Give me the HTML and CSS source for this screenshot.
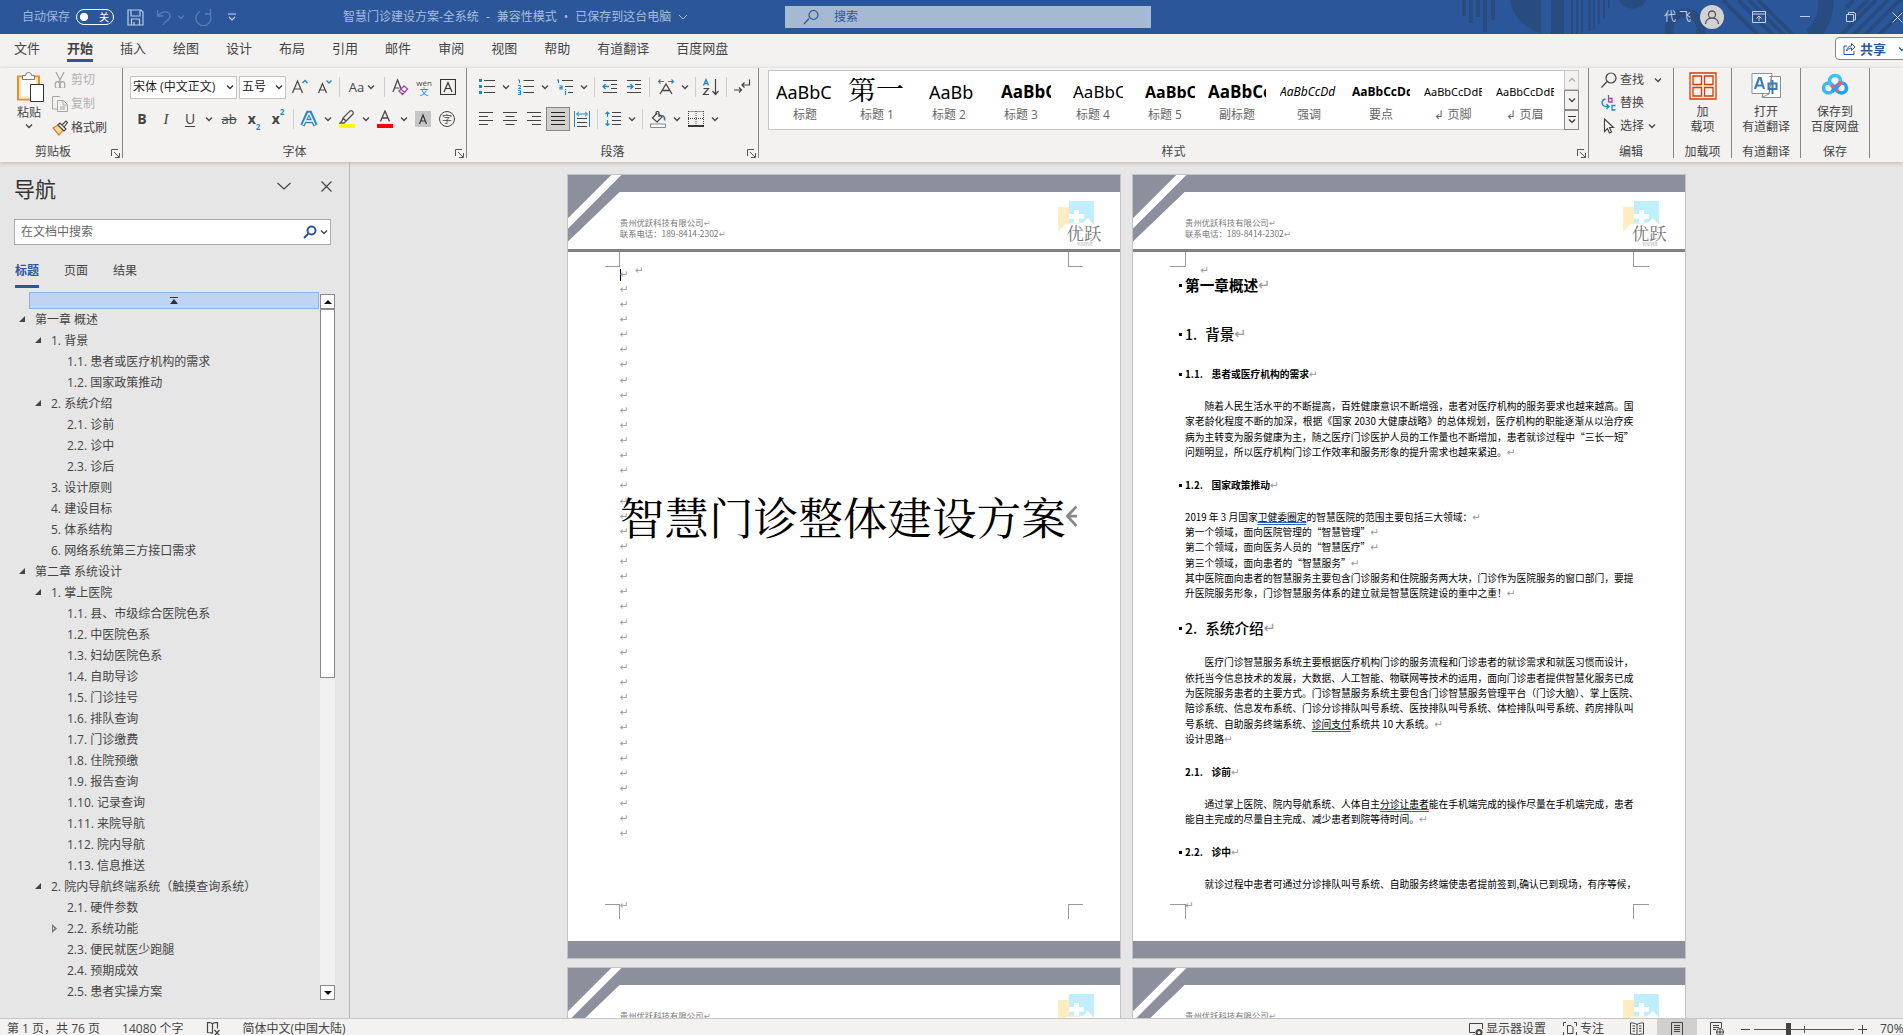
FILE: index.html
```html
<!DOCTYPE html>
<html lang="zh-CN">
<head>
<meta charset="utf-8">
<title>智慧门诊建设方案-全系统</title>
<link rel="stylesheet" href="styles.css">
</head>
<body>
<svg class="defs" aria-hidden="true">
  <symbol id="chev" viewBox="0 0 8 8"><path d="M1 2.5l3 3 3-3" fill="none" stroke="currentColor" stroke-width="1.3"/></symbol>
  <symbol id="launch" viewBox="0 0 9 9"><path d="M.5 7V.5H7M3 3l5 5M8.500 4v4.500H4" fill="none" stroke="#555"/></symbol>
  <symbol id="corner" viewBox="0 0 54 67"><path d="M51 17L0 66V0H51Z" fill="#8b909c"/><path d="M43 0H53L0 53V43Z" fill="#fff"/></symbol>
  <symbol id="logo" viewBox="0 0 44 47">
    <path d="M0 7h12v16h12v-1L22 24H8L0 32Z" fill="#ffecc0"/>
    <path d="M11 1h25v24l-6-7-5 5H11Z" fill="#bfeeff"/>
    <path d="M16 10h5v4h5v5h-5v4h-5v-4h-5v-5h5Z" fill="#fff"/>
  </symbol>
</svg>

<header class="titlebar">
  <svg class="deco" width="463" height="34" viewBox="0 0 463 34" aria-hidden="true">
    <g fill="#284c80">
      <path d="M22 0h4v16h-4zM29 0h4v23h-4zM36 0h4v17h-4zM43 0h4v32h-4zM51 0h4v20h-4z"/>
      <path d="M70 0h31v33C85 29 73 17 70 0ZM111 0h13v34h-13zM131 0h2v34h-2zM136 0h2v34h-2zM141 0h2v33h-2zM148 0h3v31h-3zM153 0h2v29h-2zM158 0h2v24h-2zM163 0h2v18h-2zM168 0h2v8h-2z"/>
      <path d="M179 0h27a14 12 0 0 1-27 0Z"/>
    </g>
    <g fill="none" stroke="#284c80">
      <circle cx="245" cy="29" r="16" stroke-width="9"/>
      <path d="M283 0l40 40M298 0l38 38M309 0l36 36M318 0l34 34" stroke-width="4"/>
      <path d="M386 0q0 25-16 36" stroke-width="15"/>
      <path d="M396 40L436 0M408 40L448 0M420 40L462 -2M434 40L470 4M406 8l8-8M408 20l20-20" stroke-width="4"/>
    </g>
  </svg>
  <div class="quick">
    <span class="autosave">自动保存</span>
    <button class="toggle" aria-label="自动保存 关"><i></i><span>关</span></button>
    <button class="tb save" aria-label="保存"><svg width="17" height="17" viewBox="0 0 17 17"><path d="M1 1h13l2 2v13H1ZM4 1v6h9V1M4.500 16v-6h8v6M7 13v3" fill="none" stroke="#b9cae6" stroke-width="1.200"/></svg></button>
    <button class="tb undo" aria-label="撤消"><svg width="16" height="17" viewBox="0 0 16 17"><path d="M1.500 1v6h6M2 7C5 2 14 1 14 7c0 4-5 5-7 9" fill="none" stroke="#5a7db8" stroke-width="1.300"/></svg></button>
    <button class="tb" aria-label="撤消选项"><svg class="c dim"><use href="#chev"/></svg></button>
    <button class="tb redo" aria-label="重复"><svg width="17" height="17" viewBox="0 0 17 17"><path d="M10 5h5.500V0M15 5.500A7.500 7.500 0 1 1 5 2.500" fill="none" stroke="#5a7db8" stroke-width="1.300"/></svg></button>
    <button class="tb more" aria-label="自定义快速访问工具栏"><svg width="8" height="8" viewBox="0 0 8 8"><path d="M0 1h8M1 4l3 3 3-3" fill="none" stroke="#c6d4ec" stroke-width="1.200"/></svg></button>
  </div>
  <div class="doctitle"><span>智慧门诊建设方案-全系统</span><span>-</span><span>兼容性模式</span><span>•</span><span>已保存到这台电脑</span><svg width="10" height="10" viewBox="0 0 10 10"><path d="M1 3l4 4 4-4" fill="none" stroke="currentColor"/></svg></div>
  <label class="topsearch"><svg width="16" height="16" viewBox="0 0 16 16"><path d="M6 9.500L1 15M6 6a4.500 4.500 0 1 0 9 0a4.500 4.500 0 1 0-9 0" fill="none" stroke="#2b579a" stroke-width="1.200"/></svg><input type="text" placeholder="搜索"></label>
  <div class="account">
    <span>代 飞</span>
    <span class="avatar"><svg width="16" height="16" viewBox="0 0 16 16"><path d="M4.500 5.500a3.500 3.500 0 1 0 7 0a3.500 3.500 0 1 0-7 0M1.500 15c0-4 3-6 6.500-6s6.500 2 6.500 6" fill="none" stroke="#555" stroke-width="1.300"/></svg></span>
  </div>
  <div class="winctl">
    <button aria-label="功能区显示选项"><svg width="14" height="12" viewBox="0 0 14 12"><path d="M.5.5h13v11H.5ZM.5 3h13M7 10V5M4.500 7.500L7 5l2.500 2.500" fill="none" stroke="currentColor"/></svg></button>
    <button aria-label="最小化"><svg width="10" height="10" viewBox="0 0 10 10"><path d="M0 4.500h10" stroke="currentColor"/></svg></button>
    <button aria-label="还原"><svg width="10" height="10" viewBox="0 0 10 10"><path d="M.5 2.500h7v7h-7ZM2.500 2V.5h5.500a1.500 1.500 0 0 1 1.500 1.500V8H8" fill="none" stroke="currentColor"/></svg></button>
    <button aria-label="关闭"><svg width="11" height="11" viewBox="0 0 11 11"><path d="M.5.5l10 10M10.500.5l-10 10" stroke="currentColor"/></svg></button>
  </div>
</header>

<nav class="tabs">
  <a href="#">文件</a><a href="#" class="on">开始</a><a href="#">插入</a><a href="#">绘图</a><a href="#">设计</a><a href="#">布局</a><a href="#">引用</a><a href="#">邮件</a><a href="#">审阅</a><a href="#">视图</a><a href="#">帮助</a><a href="#">有道翻译</a><a href="#">百度网盘</a>
  <button class="share"><svg width="13" height="13" viewBox="0 0 13 13"><path d="M4 4H1v8.500h10V9M3.500 9C4 5.500 6 4 8.500 4V1.500L12 5 8.500 8.500V6C6.500 6 5 7 3.500 9Z" fill="none" stroke="#2b579a"/></svg><b>共享</b><svg class="c"><use href="#chev"/></svg></button>
</nav>

<section class="ribbon">
  <div class="group g-clip">
    <div class="body cliprow">
      <button class="big"><svg width="32" height="31" viewBox="-4 0 32 31"><path d="M1 4.500h21v23H1Z" fill="#fff" stroke="#e6902a" stroke-width="2"/><path d="M3 6.500h17v19H3Z" fill="none" stroke="#fbe3b8" stroke-width="2"/><path d="M5.500 7.500V3.500h3a3 3 0 0 1 6 0h3v4Z" fill="#fff" stroke="#777"/><path d="M13.500 12.500h13v17h-13Z" fill="#fff" stroke="#333"/></svg><span>粘贴</span><svg class="c"><use href="#chev"/></svg></button>
      <div class="stack">
        <button class="off"><svg width="16" height="16" viewBox="0 0 16 16"><path d="M4 0l5.500 11M12 0L6.500 11M3.500 13a2.300 2.300 0 1 0 4 0a2.300 2.300 0 1 0-4 0M8.500 13a2.300 2.300 0 1 0 4 0a2.300 2.300 0 1 0-4 0" fill="none" stroke="#a5a5a5" stroke-width="1.200"/></svg>剪切</button>
        <button class="off"><svg width="16" height="16" viewBox="0 0 16 16"><path d="M5 13H.5V.5h7l1 1M5.500 4.500h6l4 4v7h-10ZM11 5v4h4M8 11h5M8 13h5" fill="none" stroke="#a5a5a5"/></svg>复制</button>
        <button><svg width="16" height="16" viewBox="0 0 16 16"><path d="M1 8l5-3 5 5-4 5Z" fill="#fbd9a5" stroke="#e07a1c" stroke-width="1.200"/><path d="M6 5l2-2 6 6-2 2ZM10 5l4-4 1.500 1.500L12 7" fill="#fff" stroke="#444" stroke-width="1.200"/></svg>格式刷</button>
      </div>
    </div>
    <div class="cap">剪贴板<svg class="launch"><use href="#launch"/></svg></div>
  </div>

  <div class="group g-font">
    <div class="body rows">
      <div class="row">
        <select class="face" aria-label="字体"><option>宋体 (中文正文)</option></select>
        <select class="size" aria-label="字号"><option>五号</option></select>
        <button class="ib" aria-label="增大字号"><svg width="18" height="18" viewBox="0 0 18 18"><path d="M1.500 15L6.500 3l5 12M3.200 11h6.600" fill="none" stroke="#444" stroke-width="1.200"/><path d="M11.500 5L14 2.500 16.500 5" fill="none" stroke="#1f88cc" stroke-width="1.300"/></svg></button>
        <button class="ib" aria-label="减小字号"><svg width="18" height="18" viewBox="0 0 18 18"><path d="M3.500 15L7.500 5.500l4 9.500M4.800 12h5.400" fill="none" stroke="#444" stroke-width="1.200"/><path d="M11.500 2.500L14 5l2.500-2.500" fill="none" stroke="#1f88cc" stroke-width="1.300"/></svg></button>
        <i class="sep"></i>
        <button class="ib w38 aa">Aa<svg class="c"><use href="#chev"/></svg></button>
        <i class="sep"></i>
        <button class="ib" aria-label="清除格式"><svg width="18" height="18" viewBox="0 0 18 18"><path d="M2 14L6.500 2 11 13M3.500 10h5" fill="none" stroke="#444" stroke-width="1.200"/><path d="M8 13l5-5 3.500 3-5 5.500ZM10 11l3.500 3.500" fill="#fff" stroke="#a33fb0" stroke-width="1.400"/></svg></button>
        <button class="ib pinyin" aria-label="拼音指南"><span>wén</span><em>文</em></button>
        <button class="ib" aria-label="字符边框"><svg width="16" height="16" viewBox="0 0 16 16"><path d="M.5.5h15v15H.5ZM4 13L8 3.500 12 13M5.300 9.500h5.400" fill="none" stroke="#333" stroke-width="1.200"/></svg></button>
      </div>
      <div class="row">
        <button class="ib"><b>B</b></button>
        <button class="ib it">I</button>
        <button class="ib un">U</button>
        <button class="dd" aria-label="下划线选项"><svg class="c"><use href="#chev"/></svg></button>
        <button class="ib w26 st"><span>ab</span></button>
        <button class="ib"><b>x</b><sub>2</sub></button>
        <button class="ib"><b>x</b><sup>2</sup></button>
        <i class="sep"></i>
        <button class="ib" aria-label="文本效果"><svg width="18" height="18" viewBox="0 0 18 18"><path d="M2.500 15.500L8 3h2l5.500 12.500M5.500 11h7" fill="none" stroke="#2f86cf" stroke-width="4.500"/><path d="M3 15L8.500 3.500h1L15 15M5.500 11h7" fill="none" stroke="#fff" stroke-width="1.300"/></svg></button>
        <button class="dd" aria-label="文本效果选项"><svg class="c"><use href="#chev"/></svg></button>
        <button class="ib" aria-label="突出显示"><svg width="18" height="18" viewBox="0 0 18 18"><path d="M1 14h16v4H1Z" fill="#ff0"/><path d="M5 8l3 3 7-7c1-2-1-4-3-3ZM5 8l-1 3-2 2h4l2-2" fill="none" stroke="#555" stroke-width="1.300"/></svg></button>
        <button class="dd" aria-label="颜色选项"><svg class="c"><use href="#chev"/></svg></button>
        <button class="ib" aria-label="字体颜色"><svg width="18" height="18" viewBox="0 0 18 18"><path d="M1 14h16v4H1Z" fill="#f00"/><path d="M4.500 11.500L9 1l4.500 10.500M6 8h6" fill="none" stroke="#444" stroke-width="1.300"/></svg></button>
        <button class="dd" aria-label="字体颜色选项"><svg class="c"><use href="#chev"/></svg></button>
        <button class="ib" aria-label="字符底纹"><svg width="16" height="16" viewBox="0 0 16 16"><path d="M0 0h16v16H0Z" fill="#c6c6c6"/><path d="M4.500 13L8 4l3.500 9M5.700 10h4.600" fill="none" stroke="#333" stroke-width="1.200"/></svg></button>
        <button class="ib circ"><span>字</span></button>
      </div>
    </div>
    <div class="cap">字体<svg class="launch"><use href="#launch"/></svg></div>
  </div>

  <div class="group g-para">
    <div class="body rows">
      <div class="row">
        <button class="ib w25" aria-label="项目符号"><svg width="16" height="16" viewBox="0 0 16 16"><path d="M0 0h3v3H0zM0 6h3v3H0zM0 12h3v3H0z" fill="#1f88cc"/><path d="M5 1.500h11M5 7.500h11M5 13.500h11" stroke="#444"/></svg></button>
        <button class="dd" aria-label="项目符号选项"><svg class="c"><use href="#chev"/></svg></button>
        <button class="ib w25" aria-label="编号"><svg width="16" height="16" viewBox="0 0 16 16"><path d="M0 1h1.500v3M0 6.500h2.500V8L.5 9.500h2.500M0 11.500h2.500v4H0M.5 13.500h2" fill="none" stroke="#1f88cc"/><path d="M5.500 1.500H16M5.500 7.500H16M5.500 13.500H16" stroke="#444"/></svg></button>
        <button class="dd" aria-label="编号选项"><svg class="c"><use href="#chev"/></svg></button>
        <button class="ib w25" aria-label="多级列表"><svg width="16" height="16" viewBox="0 0 16 16"><path d="M0 1h1.500v3M2.500 7h2.500v3H3V8.500h2M8.500 10v1M8.500 12v4" fill="none" stroke="#1f88cc" stroke-width="1.200"/><path d="M5 1.500h11M8 7.500h8M11 13.500h5" stroke="#444"/></svg></button>
        <button class="dd" aria-label="多级列表选项"><svg class="c"><use href="#chev"/></svg></button>
        <i class="sep"></i>
        <button class="ib" aria-label="减少缩进量"><svg width="16" height="16" viewBox="0 0 16 16"><path d="M1 1.500h14M9 5.500h6M9 9.500h6M1 13.500h14" stroke="#444"/><path d="M7 7.500H1M3.500 5L1 7.500 3.500 10" fill="none" stroke="#1f88cc" stroke-width="1.300"/></svg></button>
        <button class="ib" aria-label="增加缩进量"><svg width="16" height="16" viewBox="0 0 16 16"><path d="M1 1.500h14M9 5.500h6M9 9.500h6M1 13.500h14" stroke="#444"/><path d="M1 7.500h6M4.500 5L7 7.500 4.500 10" fill="none" stroke="#1f88cc" stroke-width="1.300"/></svg></button>
        <i class="sep"></i>
        <button class="ib w25" aria-label="中文版式"><svg width="18" height="18" viewBox="0 0 18 18"><path d="M3 16L9 6l6 10M5 12.500h8" fill="none" stroke="#444" stroke-width="1.300"/><path d="M7 3.500H1.500M3.500 1.500l-2 2 2 2M11 3.500h5.500M14.500 1.500l2 2-2 2" fill="none" stroke="#1f88cc" stroke-width="1.200"/></svg></button>
        <button class="dd" aria-label="中文版式选项"><svg class="c"><use href="#chev"/></svg></button>
        <i class="sep"></i>
        <button class="ib" aria-label="排序"><svg width="18" height="18" viewBox="0 0 18 18"><path d="M1.500 7.500L4 1.500l2.500 6M2.500 5.500h3" fill="none" stroke="#1f88cc" stroke-width="1.300"/><path d="M1.500 10.500h5l-5 6h5.500M13.500 1v15M10.500 13l3 3.500 3-3.500" fill="none" stroke="#444" stroke-width="1.200"/></svg></button>
        <i class="sep"></i>
        <button class="ib" aria-label="显示编辑标记"><svg width="18" height="18" viewBox="0 0 18 18"><path d="M16.500 1.500v5.500H9M11.500 4.500L9 7l2.500 2.500M1 12h7.500M6 9.500L8.500 12 6 14.500" fill="none" stroke="#444" stroke-width="1.200"/></svg></button>
      </div>
      <div class="row">
        <button class="ib" aria-label="左对齐"><svg width="14" height="14" viewBox="0 0 14 14"><path d="M0 .5h14M0 4.500h9M0 8.500h14M0 12.500h9" stroke="#444"/></svg></button>
        <button class="ib" aria-label="居中"><svg width="14" height="14" viewBox="0 0 14 14"><path d="M0 .5h14M2.500 4.500h9M0 8.500h14M2.500 12.500h9" stroke="#444"/></svg></button>
        <button class="ib" aria-label="右对齐"><svg width="14" height="14" viewBox="0 0 14 14"><path d="M0 .5h14M5 4.500h9M0 8.500h14M5 12.500h9" stroke="#444"/></svg></button>
        <button class="ib sel" aria-label="两端对齐"><svg width="14" height="14" viewBox="0 0 14 14"><path d="M0 .5h14M0 4.500h14M0 8.500h14M0 12.500h14" stroke="#222"/></svg></button>
        <button class="ib" aria-label="分散对齐"><svg width="16" height="16" viewBox="0 0 16 16"><path d="M.5 0v16M15.500 0v16M2.500 3h11M5 .8L2.500 3 5 5.200M11 .8L13.500 3 11 5.200" fill="none" stroke="#1f88cc"/><path d="M3 7.500h10M3 11.500h10M3 15.500h10" stroke="#444"/></svg></button>
        <i class="sep"></i>
        <button class="ib" aria-label="行距"><svg width="16" height="16" viewBox="0 0 16 16"><path d="M2.500 6V1M.5 3l2-2 2 2M2.500 9v5.500M.5 12.500l2 2 2-2" fill="none" stroke="#1f88cc" stroke-width="1.200"/><path d="M7 1.500h9M7 5.500h9M7 9.500h9M7 13.500h9" stroke="#444"/></svg></button>
        <button class="dd" aria-label="行距选项"><svg class="c"><use href="#chev"/></svg></button>
        <i class="sep"></i>
        <button class="ib" aria-label="底纹"><svg width="16" height="17" viewBox="0 0 16 17"><path d="M.5 13h15v3.500H.5Z" fill="#fff" stroke="#888"/><path d="M7 2L2.500 7l4.500 4L12 6 8 2.500M9 6V2a1.500 1.500 0 0 0-3 0v2" fill="none" stroke="#444" stroke-width="1.200"/><path d="M11 4.500c3 0 4 2 3.500 5" fill="none" stroke="#2f6fa8" stroke-width="1.600"/></svg></button>
        <button class="dd" aria-label="底纹选项"><svg class="c"><use href="#chev"/></svg></button>
        <button class="ib" aria-label="边框"><svg width="16" height="16" viewBox="0 0 16 16"><path d="M.5.5h15M.5 0v15M15.500 0v15M8 0v15M0 7.500h16" stroke="#444" stroke-dasharray="1 1"/><path d="M0 15h16" stroke="#000" stroke-width="1.500"/></svg></button>
        <button class="dd" aria-label="边框选项"><svg class="c"><use href="#chev"/></svg></button>
      </div>
    </div>
    <div class="cap">段落<svg class="launch"><use href="#launch"/></svg></div>
  </div>

  <div class="group g-style">
    <div class="gallery">
      <div class="cells">
        <button><span class="s18">AaBbC</span>标题</button>
        <button><span class="song">第一</span>标题 1</button>
        <button><span class="s18 n">AaBb</span>标题 2</button>
        <button><span class="s17 n bd">AaBbC</span>标题 3</button>
        <button><span class="s17 n">AaBbC</span>标题 4</button>
        <button><span class="s16 n bd">AaBbC</span>标题 5</button>
        <button><span class="s17 bd">AaBbCc</span>副标题</button>
        <button><span class="s12 ital">AaBbCcDd</span>强调</button>
        <button><span class="s12 bd">AaBbCcDd</span>要点</button>
        <button><span class="s11">AaBbCcDdE</span>↲ 页脚</button>
        <button><span class="s11">AaBbCcDdE</span>↲ 页眉</button>
      </div>
      <div class="gscroll">
        <button class="off" aria-label="上一行"><svg class="c up"><use href="#chev"/></svg></button>
        <button aria-label="下一行"><svg class="c"><use href="#chev"/></svg></button>
        <button aria-label="其他"><svg width="8" height="8" viewBox="0 0 8 8"><path d="M0 .5h8M1 3.500l3 3 3-3" fill="none" stroke="#333" stroke-width="1.200"/></svg></button>
      </div>
    </div>
    <div class="cap">样式<svg class="launch"><use href="#launch"/></svg></div>
  </div>

  <div class="group g-edit">
    <div class="stack">
      <button><svg width="16" height="16" viewBox="0 0 16 16"><path d="M6 9.500L.5 15.500M5 6a5 5 0 1 0 10 0a5 5 0 1 0-10 0" fill="none" stroke="#444" stroke-width="1.200"/></svg>查找<svg class="c far"><use href="#chev"/></svg></button>
      <button><svg width="16" height="16" viewBox="0 0 16 16"><path d="M7.500 0v7M7.500 3.500h3.500v3.500H7.500" fill="none" stroke="#a33fb0" stroke-width="1.300"/><path d="M14.500 10.500H11v4.500h3.500M4.500 4C0 5 0 10 4 11.500H8M5.500 9L8 11.500 5.500 14" fill="none" stroke="#1f88cc" stroke-width="1.300"/></svg>替换</button>
      <button><svg width="16" height="16" viewBox="0 0 16 16"><path d="M3.500 1v12.500l3-3 2 4.500 2-1-2-4.500h4Z" fill="#fff" stroke="#444" stroke-width="1.200"/></svg>选择<svg class="c"><use href="#chev"/></svg></button>
    </div>
    <div class="cap">编辑</div>
  </div>
  <div class="group g-add">
    <button class="big"><svg width="28" height="28" viewBox="0 0 28 28"><path d="M1 1h26v26H1ZM4 4h8.500v8.500H4ZM15.500 4H24v8.500h-8.500ZM4 15.500h8.500V24H4ZM15.500 15.500H24V24h-8.500Z" fill="none" stroke="#d83b01" stroke-width="1.300"/></svg><span>加<br>载项</span></button>
    <div class="cap">加载项</div>
  </div>
  <div class="group g-you">
    <button class="big"><svg width="30" height="28" viewBox="0 0 30 28"><path d="M1 1.500h20l-3 20H1ZM18.500 4.500h11v21H11l1-4M20.500 4.500L18 22l-6 3" fill="#fff" stroke="#8a8f96"/><path d="M4 17L8 6h1.500L13 17M5.500 13.500h6" fill="none" stroke="#3a7ab8" stroke-width="2.200"/><path d="M17.500 11.500h8v5.500h-8ZM21.500 8v14" fill="none" stroke="#3a7ab8" stroke-width="2"/></svg><span>打开<br>有道翻译</span></button>
    <div class="cap">有道翻译</div>
  </div>
  <div class="group g-bai">
    <button class="big"><svg width="28" height="28" viewBox="0 0 28 28"><g fill="none" stroke-width="3.600"><circle cx="7.500" cy="16" r="5" stroke="#3cb8f2"/><circle cx="20.500" cy="16" r="5" stroke="#1fa0f0"/><circle cx="14" cy="9" r="5.500" stroke="#3cc3f5"/><path d="M19.500 9a5.500 5.500 0 0 1-9 4.300M10.500 13.300L17 19.500" stroke="#f4596f"/><path d="M17.500 13l-6.500 6.500" stroke="#1fa0f0"/></g></svg><span>保存到<br>百度网盘</span></button>
    <div class="cap">保存</div>
  </div>
  <div class="rest"></div>
</section>

<main class="work">
  <aside class="navpane">
    <div class="navhead"><h2>导航</h2>
      <button aria-label="任务窗格选项"><svg width="14" height="14" viewBox="0 0 14 14"><path d="M.5 4L7 10l6.500-6" fill="none" stroke="#444" stroke-width="1.200"/></svg></button>
      <button aria-label="关闭窗格"><svg width="11" height="11" viewBox="0 0 11 11"><path d="M.5.5l10 10M10.500.5l-10 10" stroke="#444" stroke-width="1.200"/></svg></button>
    </div>
    <label class="navsearch"><input type="text" placeholder="在文档中搜索"><svg width="14" height="14" viewBox="0 0 14 14"><path d="M5 9L1 13M4.500 5.500a4 4 0 1 0 8 0a4 4 0 1 0-8 0" fill="none" stroke="#2b579a" stroke-width="2"/></svg><svg class="c"><use href="#chev"/></svg></label>
    <div class="navtabs"><a href="#" class="on">标题</a><a href="#">页面</a><a href="#">结果</a></div>
    <div class="treewrap">
      <div class="tree">
        <button class="totop" aria-label="跳转到开头"><svg width="8" height="8" viewBox="0 0 8 8"><path d="M0 .5h8" stroke="#333"/><path d="M4 2l4 5H0Z" fill="#333"/></svg></button>
        <ul>
          <li class="l1 open"><a href="#">第一章 概述</a></li>
          <li class="l2 open"><a href="#">1. 背景</a></li>
          <li class="l3"><a href="#">1.1. 患者或医疗机构的需求</a></li>
          <li class="l3"><a href="#">1.2. 国家政策推动</a></li>
          <li class="l2 open"><a href="#">2. 系统介绍</a></li>
          <li class="l3"><a href="#">2.1. 诊前</a></li>
          <li class="l3"><a href="#">2.2. 诊中</a></li>
          <li class="l3"><a href="#">2.3. 诊后</a></li>
          <li class="l2"><a href="#">3. 设计原则</a></li>
          <li class="l2"><a href="#">4. 建设目标</a></li>
          <li class="l2"><a href="#">5. 体系结构</a></li>
          <li class="l2"><a href="#">6. 网络系统第三方接口需求</a></li>
          <li class="l1 open"><a href="#">第二章 系统设计</a></li>
          <li class="l2 open"><a href="#">1. 掌上医院</a></li>
          <li class="l3"><a href="#">1.1. 县、市级综合医院色系</a></li>
          <li class="l3"><a href="#">1.2. 中医院色系</a></li>
          <li class="l3"><a href="#">1.3. 妇幼医院色系</a></li>
          <li class="l3"><a href="#">1.4. 自助导诊</a></li>
          <li class="l3"><a href="#">1.5. 门诊挂号</a></li>
          <li class="l3"><a href="#">1.6. 排队查询</a></li>
          <li class="l3"><a href="#">1.7. 门诊缴费</a></li>
          <li class="l3"><a href="#">1.8. 住院预缴</a></li>
          <li class="l3"><a href="#">1.9. 报告查询</a></li>
          <li class="l3"><a href="#">1.10. 记录查询</a></li>
          <li class="l3"><a href="#">1.11. 来院导航</a></li>
          <li class="l3"><a href="#">1.12. 院内导航</a></li>
          <li class="l3"><a href="#">1.13. 信息推送</a></li>
          <li class="l2 open"><a href="#">2. 院内导航终端系统（触摸查询系统）</a></li>
          <li class="l3"><a href="#">2.1. 硬件参数</a></li>
          <li class="l3 shut"><a href="#">2.2. 系统功能</a></li>
          <li class="l3"><a href="#">2.3. 便民就医少跑腿</a></li>
          <li class="l3"><a href="#">2.4. 预期成效</a></li>
          <li class="l3"><a href="#">2.5. 患者实操方案</a></li>
        </ul>
      </div>
      <div class="vbar"><button aria-label="向上滚动"><i class="tri-up"></i></button><div class="thumb"></div><div class="track"></div><button aria-label="向下滚动"><i class="tri-down"></i></button></div>
    </div>
  </aside>

  <div class="canvas">
    <article class="page">
      <header class="phead"><svg class="cor" width="78" height="97"><use href="#corner"/></svg><p>贵州优跃科技有限公司<s>↵</s><br>联系电话：189-8414-2302<s>↵</s></p><div class="brand"><svg width="63" height="67"><use href="#logo"/></svg><b>优跃</b><small>YOUYUE</small></div></header>
      <i class="crop tl"></i><i class="crop tr"></i><i class="crop bl"></i><i class="crop br"></i>
      <s class="anchor">↵</s><i class="caret"></i>
      <div class="marks"><s>↵</s><s>↵</s><s>↵</s><s>↵</s><s>↵</s><s>↵</s><s>↵</s><s>↵</s><s>↵</s><s>↵</s><s>↵</s><s>↵</s><s>↵</s><s>↵</s><s>↵</s><s>↵</s><s>↵</s><s>↵</s><s>↵</s><s>↵</s><s>↵</s><s>↵</s><s>↵</s><s>↵</s><s>↵</s><s>↵</s><s>↵</s><s>↵</s><s>↵</s><s>↵</s><s>↵</s><s>↵</s><s>↵</s><s>↵</s><s>↵</s><s>↵</s><s>↵</s><s>↵</s></div>
      <h1 class="cover">智慧门诊整体建设方案<svg width="16" height="32" viewBox="0 0 16 32"><path d="M15 2L2 16l13 14M2 16h14" fill="none" stroke="#888" stroke-width="4"/></svg></h1>
      <s class="footmark">↵</s>
      <footer class="pfoot"></footer>
    </article>

    <article class="page">
      <header class="phead"><svg class="cor" width="78" height="97"><use href="#corner"/></svg><p>贵州优跃科技有限公司<s>↵</s><br>联系电话：189-8414-2302<s>↵</s></p><div class="brand"><svg width="63" height="67"><use href="#logo"/></svg><b>优跃</b><small>YOUYUE</small></div></header>
      <i class="crop tl"></i><i class="crop tr"></i><i class="crop bl"></i><i class="crop br"></i>
      <s class="anchor">↵</s>
      <div class="text">
        <h2 class="chapter">第一章概述<s>↵</s></h2>
        <h2><span>1.</span>背景<s>↵</s></h2>
        <h3><span>1.1.</span>患者或医疗机构的需求<s>↵</s></h3>
        <p><span class="ln in">随着人民生活水平的不断提高，百姓健康意识不断增强，患者对医疗机构的服务要求也越来越高。国</span><span class="ln">家老龄化程度不断的加深，根据《国家 2030 大健康战略》的总体规划，医疗机构的职能逐渐从以治疗疾</span><span class="ln">病为主转变为服务健康为主，随之医疗门诊医护人员的工作量也不断增加，患者就诊过程中“三长一短”</span>问题明显，所以医疗机构门诊工作效率和服务形象的提升需求也越来紧迫。<s>↵</s></p>
        <h3><span>1.2.</span>国家政策推动<s>↵</s></h3>
        <p>2019 年 3 月国家<u>卫健委圈定</u>的智慧医院的范围主要包括三大领域：<s>↵</s></p>
        <p>第一个领域，面向医院管理的“智慧管理”<s>↵</s></p>
        <p>第二个领域，面向医务人员的“智慧医疗”<s>↵</s></p>
        <p>第三个领域，面向患者的“智慧服务”<s>↵</s></p>
        <p><span class="ln">其中医院面向患者的智慧服务主要包含门诊服务和住院服务两大块，门诊作为医院服务的窗口部门，要提</span>升医院服务形象，门诊智慧服务体系的建立就是智慧医院建设的重中之重！<s>↵</s></p>
        <h2><span>2.</span>系统介绍<s>↵</s></h2>
        <p><span class="ln in">医疗门诊智慧服务系统主要根据医疗机构门诊的服务流程和门诊患者的就诊需求和就医习惯而设计，</span><span class="ln">依托当今信息技术的发展，大数据、人工智能、物联网等技术的运用，面向门诊患者提供智慧化服务已成</span><span class="ln">为医院服务患者的主要方式。门诊智慧服务系统主要包含门诊智慧服务管理平台（门诊大脑）、掌上医院、</span><span class="ln">陪诊系统、信息发布系统、门诊分诊排队叫号系统、医技排队叫号系统、体检排队叫号系统、药房排队叫</span>号系统、自助服务终端系统、<u>诊间支付</u>系统共 10 大系统。<s>↵</s></p>
        <p>设计思路<s>↵</s></p>
        <h3 class="plain"><span>2.1.</span>诊前<s>↵</s></h3>
        <p><span class="ln in">通过掌上医院、院内导航系统、人体自主<u>分诊让患者</u>能在手机端完成的操作尽量在手机端完成，患者</span>能自主完成的尽量自主完成、减少患者到院等待时间。<s>↵</s></p>
        <h3><span>2.2.</span>诊中<s>↵</s></h3>
        <p><span class="ln in">就诊过程中患者可通过分诊排队叫号系统、自助服务终端使患者提前签到,确认已到现场，有序等候，</span></p>
      </div>
      <s class="footmark">↵</s>
      <footer class="pfoot"></footer>
    </article>

    <article class="page">
      <header class="phead"><svg class="cor" width="78" height="97"><use href="#corner"/></svg><p>贵州优跃科技有限公司<s>↵</s><br>联系电话：189-8414-2302<s>↵</s></p><div class="brand"><svg width="63" height="67"><use href="#logo"/></svg><b>优跃</b><small>YOUYUE</small></div></header>
    </article>
    <article class="page">
      <header class="phead"><svg class="cor" width="78" height="97"><use href="#corner"/></svg><p>贵州优跃科技有限公司<s>↵</s><br>联系电话：189-8414-2302<s>↵</s></p><div class="brand"><svg width="63" height="67"><use href="#logo"/></svg><b>优跃</b><small>YOUYUE</small></div></header>
    </article>
  </div>
</main>

<footer class="status">
  <div class="left">
    <span>第 1 页，共 76 页</span><span>14080 个字</span>
    <button aria-label="校对"><svg width="15" height="14" viewBox="0 0 15 14"><path d="M6.500 11.500c-1-1-3-1-5-1V.5c2 0 4 0 5 1.500 1-1.500 3-1.500 5-1.500v6M6.500 2v9.500M8.500 8l5 5.500M13.500 8l-5 5.500" fill="none" stroke="#444" stroke-width="1.200"/></svg></button>
    <span>简体中文(中国大陆)</span>
  </div>
  <div class="right">
    <button class="st1"><svg width="14" height="14" viewBox="0 0 14 14"><path d="M6 10.500H.5V1.500h13V7M4 13h2" fill="none" stroke="#444"/><circle cx="10" cy="10.500" r="2.500" fill="none" stroke="#444" stroke-width="2"/></svg>显示器设置</button>
    <button class="st2"><svg width="14" height="14" viewBox="0 0 14 14"><path d="M.5 4V.5H3M11 .5h2.500V4M.5 10v3.500H3M13.500 10v3.500H11M4.500 3.500h3.500l2 2v6H4.500Z" fill="none" stroke="#444"/></svg>专注</button>
    <button class="view" aria-label="阅读视图"><svg width="14" height="14" viewBox="0 0 14 14"><path d="M7 2.500C5 1 3 1 .5 1v11c2.500 0 4.500 0 6.500 1.500C9 12 11 12 13.500 12V1C11 1 9 1 7 2.500v11M2.500 4h2.500M2.500 6.500h2.500M2.500 9h2.500M9 4h2.500M9 6.500h2.500M9 9h2.500" fill="none" stroke="#444"/></svg></button>
    <button class="view on" aria-label="页面视图"><svg width="12" height="14" viewBox="0 0 12 14"><path d="M.5.5h11v13H.5ZM3 3.500h6M3 5.500h6M3 7.500h6M3 9.500h6" fill="none" stroke="#444"/></svg></button>
    <button class="view" aria-label="Web 版式视图"><svg width="14" height="14" viewBox="0 0 14 14"><path d="M6 13.500H.5V.5h11V6M3 3.500h6M3 5.500h6M3 7.500h3" fill="none" stroke="#444"/><circle cx="10" cy="10" r="3.500" fill="none" stroke="#444"/><path d="M6.500 10h7M10 6.500v7" stroke="#444"/></svg></button>
    <button class="zm" aria-label="缩小"><svg width="9" height="9" viewBox="0 0 9 9"><path d="M0 4.500h9" stroke="#444"/></svg></button>
    <input type="range" min="10" max="190" value="70" aria-label="缩放">
    <button class="zm" aria-label="放大"><svg width="9" height="9" viewBox="0 0 9 9"><path d="M0 4.500h9M4.500 0v9" stroke="#444"/></svg></button>
    <span class="pct">70%</span>
  </div>
</footer>
</body>
</html>
```
FILE: styles.css
```css
* { box-sizing: border-box; }
html, body { height: 100%; }
body {
  margin: 0;
  display: flex;
  flex-direction: column;
  overflow: hidden;
  background: #e6e6e6;
  color: #444;
  font: 12px/16px "Open Sans", "Noto Sans CJK SC", sans-serif;
}
button {
  margin: 0; padding: 0; border: 0; background: none;
  color: inherit; font: inherit;
  display: inline-flex; align-items: center; justify-content: center;
  flex: none;
}
a { color: inherit; text-decoration: none; }
svg { display: block; flex: none; }
h1, h2, h3, p, ul { margin: 0; padding: 0; font-weight: 400; }
ul { list-style: none; }
.defs { position: absolute; width: 0; height: 0; }
.c { width: 8px; height: 8px; }
.dim { color: #5a7db8; }

/* title bar */
.titlebar {
  position: relative;
  flex: none;
  height: 34px;
  display: flex;
  align-items: center;
  background: #2b579a;
  color: #a9bddd;
  overflow: hidden;
}
.deco { position: absolute; right: 0; top: 0; }
.quick { flex: none; width: 343px; padding-left: 22px; display: flex; align-items: center; }
.autosave { width: 54px; color: #9fb6da; }
.toggle {
  width: 38px; height: 16px; padding: 0 4px 0 3px;
  justify-content: space-between;
  border: 1px solid #fff; border-radius: 8px;
  color: #fff; font-size: 10px;
}
.toggle i { width: 8px; height: 8px; border-radius: 4px; background: #fff; }
.save { margin: 0 12px 0 13px; }
.undo { margin-right: 5px; }
.redo { margin: 0 16px 0 10px; }
.doctitle { width: 442px; display: flex; align-items: center; gap: 7px; white-space: nowrap; }
.topsearch {
  flex: 0 1 366px; height: 22px;
  display: flex; align-items: center; gap: 15px;
  padding-left: 18px;
  background: #a6b9d2;
}
input { border: 0; padding: 0; background: none; font: inherit; outline: 0; min-width: 0; }
.topsearch input { flex: 1; }
.topsearch input::placeholder { color: #2b579a; opacity: 1; }
.account { position: relative; margin-left: auto; display: flex; align-items: center; gap: 9px; padding-right: 12px; color: #c3d0e6; }
.avatar { width: 24px; height: 24px; border-radius: 12px; background: #d2d2d2; display: flex; align-items: center; justify-content: center; }
.winctl { position: relative; display: flex; margin-right: -17px; color: #c3d0e6; }
.winctl button { width: 46px; height: 34px; }

/* tabs */
.tabs {
  flex: none; height: 34px;
  display: flex; align-items: flex-start; gap: 27px;
  padding: 3px 0 0 14px;
  background: #f3f2f1;
  font-size: 13px; line-height: 22px;
  overflow: hidden;
}
.tabs a { height: 25px; white-space: nowrap; }
.tabs .on { font-weight: 700; border-bottom: 3px solid #2b579a; }
.share {
  width: 80px; height: 23px; margin: 0 -12px 0 auto;
  justify-content: flex-start; padding-left: 7px; gap: 4px;
  background: #fff; border: 1px solid #8a8886; border-radius: 4px;
  color: #2b579a;
}
.share .c { margin-left: 8px; }

/* ribbon */
.ribbon {
  position: relative; z-index: 1;
  flex: none; height: 94px;
  display: flex;
  background: #f3f2f1;
  box-shadow: 0 1px 4px #b8b6b4;
}
.group {
  flex: none; height: 90px;
  display: flex; flex-direction: column; justify-content: space-between;
  border-right: 1px solid #8a8886;
}
.g-clip { width: 123px; }
.g-font { width: 344px; }
.g-para { width: 292px; }
.g-style { flex: 1; min-width: 0; }
.g-edit { width: 85px; }
.g-add { width: 58px; }
.g-you, .g-bai { width: 69px; }
.rest { width: 33px; flex: none; }
.cap { position: relative; text-align: center; height: 16px; margin-bottom: -2px; line-height: 16px; }
.g-clip .cap { padding-right: 16px; }
.launch { position: absolute; right: 2px; bottom: 2px; width: 9px; height: 9px; }
.cliprow { display: flex; padding-left: 14px; gap: 8px; }
.big { flex-direction: column; align-self: center; justify-content: flex-start; padding-top: 4px; gap: 4px; line-height: 15px; }
.cliprow .big { width: 30px; align-self: flex-start; gap: 2px; }
.stack { display: flex; flex-direction: column; align-items: flex-start; }
.stack button { height: 24px; gap: 3px; white-space: nowrap; }
.stack .c { margin-left: 1px; }
.stack .far { margin-left: 7px; }
.g-edit .stack { padding: 0 0 0 12px; }
.g-edit .stack button { height: 23px; }
.off { color: #b0b0b0; }
.rows { padding: 7px 0 0 7px; display: flex; flex-direction: column; gap: 8px; }
.row { display: flex; align-items: center; height: 24px; }
.ib { width: 24px; height: 23px; font-size: 14px; }
.w25 { width: 25px; }
.w26 { width: 26px; }
.w38 { width: 38px; }
.aa { gap: 3px; font-size: 13px; }
.dd { width: 14px; height: 23px; }
.sep { flex: none; width: 7px; height: 20px; border-left: 3px solid transparent; border-right: 3px solid transparent; background: #d0cecc content-box; background-clip: padding-box; }
.it { font-family: "Liberation Serif", serif; font-style: italic; font-size: 15px; }
.un { text-decoration: underline; text-underline-offset: 2px; }
.st span { text-decoration: line-through; font-size: 13px; }
.ib sub, .ib sup { font-size: 8px; line-height: 8px; color: #1f88cc; font-weight: 700; }
.ib sub { align-self: flex-end; }
.ib sup { align-self: flex-start; }
.pinyin { flex-direction: column; font-size: 8px; line-height: 8px; }
.pinyin em { font-style: normal; color: #1f88cc; font-size: 9px; line-height: 9px; }
.circ span { width: 16px; height: 16px; border: 1px solid #444; border-radius: 8px; font-size: 10px; line-height: 14px; }
.sel { height: 24px; background: #d2d0ce; border: 1px solid #8a8886; }
select {
  appearance: none;
  height: 23px; margin-right: 2px; padding: 0 0 0 2px;
  border: 1px solid #c6c6c6; border-radius: 0;
  color: #222; font: inherit;
  background: #fff url("data:image/svg+xml,%3Csvg xmlns='http://www.w3.org/2000/svg' width='8' height='8'%3E%3Cpath d='M1 2.500l3 3 3-3' fill='none' stroke='%23333' stroke-width='1.300'/%3E%3C/svg%3E") no-repeat right 2px center;
}
.face { width: 107px; }
.size { width: 47px; }

.gallery { margin: 2px 9px 0 9px; height: 60px; display: flex; background: #fff; border: 1px solid #c8c6c4; }
.cells { flex: 1; min-width: 0; display: flex; overflow: hidden; }
.cells button { width: 72px; flex-direction: column; justify-content: flex-start; padding-top: 7px; color: #666; }
.cells span { display: block; width: 58px; height: 29px; line-height: 28px; color: #000; overflow: hidden; white-space: nowrap; text-align: left; font-family: "Noto Sans", sans-serif; }
.cells .n { width: 50px; align-self: flex-end; margin-right: 6px; }
.cells .s18 { font-size: 18px; }
.cells .s17 { font-size: 17px; }
.cells .s16 { font-size: 16px; }
.cells .s12 { font-size: 12px; }
.cells .s11 { font-size: 11px; }
.cells .bd { font-weight: 700; font-family: "Open Sans", sans-serif; }
.cells .ital { font-style: italic; }
.cells .song { font: 28px/20px "Noto Serif CJK SC", "Noto Sans CJK SC", serif; }
.gscroll { flex: none; width: 15px; margin: -1px; display: flex; flex-direction: column; }
.gscroll button { flex: 1; border: 1px solid #8a8886; background: #f3f2f1; }
.gscroll .off { border-color: #c8c6c4; }
.up { transform: rotate(180deg); }

/* work area */
.work { flex: 1; min-height: 0; display: flex; }
.navpane {
  flex: none; width: 350px;
  display: flex; flex-direction: column;
  border-right: 1px solid #b8b8b8;
  padding: 12px 14px 18px 14px;
}
.navhead { display: flex; align-items: center; height: 30px; margin-bottom: 15px; }
.navhead h2 { flex: 1; font-size: 21px; line-height: 30px; color: #333; }
.navhead button { width: 14px; height: 14px; margin: 0 2px 6px 26px; }
.navsearch { flex: none; display: flex; align-items: center; gap: 3px; width: 317px; height: 26px; padding: 0 2px 0 6px; background: #fff; border: 1px solid #ababab; }
.navsearch input { flex: 1; }
.navsearch input::placeholder { color: #666; opacity: 1; }
.navtabs { display: flex; gap: 25px; margin: 16px 0 4px 1px; }
.navtabs a { line-height: 20px; height: 27px; }
.navtabs .on { color: #2b579a; font-weight: 700; border-bottom: 3px solid #2b579a; }
.treewrap { flex: 1; min-height: 0; display: flex; }
.tree { width: 306px; overflow: hidden; }
.totop { display: flex; width: 290px; height: 17px; margin-left: 15px; background: #c1d3f2; border: 1px solid #8fb1e5; }
.tree li { position: relative; height: 21px; line-height: 21px; white-space: nowrap; }
.l1 { padding-left: 21px; }
.l2 { padding-left: 37px; }
.l3 { padding-left: 53px; }
.open::before { content: ""; position: absolute; width: 6px; height: 6px; top: 7px; margin-left: -16px; background: #444; clip-path: polygon(100% 0, 100% 100%, 0 100%); }
.shut::before { content: ""; position: absolute; top: 6px; margin-left: -15px; width: 5px; height: 9px; background: #777; clip-path: polygon(0 0, 100% 50%, 0 100%, 0 78%, 50% 50%, 20% 30%, 20% 78%, 0 78%); }
.vbar { width: 15px; margin-top: 2px; display: flex; flex-direction: column; background: #f0f0f0; }
.vbar button { width: 15px; height: 15px; border: 1px solid #8a8a8a; background: #fff; }
.vbar .thumb { flex: 368; background: #fff; border: 1px solid #8a8a8a; }
.vbar .track { flex: 307; }
.tri-up, .tri-down { border: 4px solid transparent; border-top: 0; border-bottom-color: #111; }
.tri-down { border-top: 4px solid #111; border-bottom: 0; }

/* document: A4 sheets laid out at 96 dpi, shown at the view's zoom */
.canvas {
  flex: 1; min-width: 0;
  display: grid;
  grid-template-columns: auto auto;
  justify-content: center;
  align-content: start;
  gap: 15px 18px;
  padding-top: 19px;
  overflow: hidden;
  zoom: 0.697;
}
.page {
  position: relative;
  width: 793px; height: 1123px;
  background: #fff;
  outline: 1px solid #c3c3c3;
  outline-offset: -1px;
  color: #000;
  font: 14px/22px "Noto Sans CJK SC", sans-serif;
}
.page s { text-decoration: none; font: 15px/10px "DejaVu Sans", sans-serif; color: #999; }
.phead {
  height: 110px; padding: 35px 75px 0;
  border-top: 25px solid #8b909c;
  border-bottom: 5px solid #808080;
  font-size: 12px; line-height: 17px; color: #777;
  position: relative;
}
.phead s { font-size: 12px; }
.cor { position: absolute; left: 0; top: -25px; }
.brand { position: absolute; right: 23px; top: 11px; width: 66px; color: #777; }
.brand b { position: absolute; left: 12px; top: 29px; font: 25px/36px "Noto Serif CJK SC", "Noto Sans CJK SC", serif; white-space: nowrap; }
.brand small { position: absolute; left: 27px; top: 61px; font-size: 6px; line-height: 8px; color: #999; }
.crop { position: absolute; width: 22px; height: 21px; border: 0 solid #999; }
.tl, .tr { top: 110px; border-bottom-width: 1px; }
.bl, .br { top: 1046px; border-top-width: 1px; }
.tl, .bl { left: 54px; border-right-width: 1px; }
.tr, .br { right: 53px; border-left-width: 1px; }
.anchor { position: absolute; left: 97px; top: 131px; }
.footmark { position: absolute; left: 75px; top: 1043px; }
.caret { position: absolute; left: 75px; top: 135px; width: 2px; height: 17px; background: #000; }
.marks { position: absolute; left: 75px; top: 137px; height: 813px; display: flex; flex-direction: column; justify-content: space-between; }
.cover { position: absolute; left: 75px; top: 441px; font: 64px/96px "Noto Serif CJK SC", "Noto Sans CJK SC", serif; white-space: nowrap; display: flex; align-items: center; }
.pfoot { position: absolute; left: 0; right: 0; bottom: 0; height: 25px; background: #8b909c; }
.text { padding: 33px 75px 0; white-space: nowrap; }
.text h2, .text h3 { position: relative; display: flex; align-items: center; }
.text h2 { font-size: 21px; line-height: 30px; font-weight: 500; margin: 24px 0 23px; }
.text .chapter { margin: 0 0 40px; font-weight: 700; }
.text h2 span { width: 29px; font-size: 20px; }
.text h3 { font-size: 14px; font-weight: 700; margin: 25px 0 24px; }
.text h3 span { width: 38px; }
.text h2 + h3 { margin-top: 32px; }
.text h2 s { font-size: 21px; }
.text h2::before, .text h3::before { content: ""; position: absolute; left: -9px; width: 4px; height: 4px; background: #000; }
.text .plain::before { display: none; }
.ln { display: block; text-align: justify; text-align-last: justify; }
.in { padding-left: 28px; }
.text u { text-decoration: underline double #2b62c8; text-underline-offset: 2px; }

/* status bar */
.status {
  position: relative;
  flex: none; height: 17px;
  display: flex; justify-content: space-between; align-items: flex-start;
  background: #f3f2f1;
  border-top: 1px solid #c8c6c4;
  line-height: 20px; white-space: nowrap;
  overflow: hidden;
}
.left, .right { display: flex; align-items: center; height: 20px; }
.left { padding-left: 7px; gap: 22px; }
.right { margin-right: -3px; }
.right button { height: 20px; gap: 3px; }
.st1 { margin-right: 17px; }
.st2 { margin-right: 13px; }
.right .view { width: 40px; }
.right .on { background: #d2d0ce; }
.zm { width: 9px; margin: 0 4px; }
.pct { margin-left: 9px; width: 26px; }
input[type="range"] {
  appearance: none; width: 100px; height: 20px; margin: 0;
  background:
    linear-gradient(#555, #555) center / 1px 7px no-repeat,
    linear-gradient(#555, #555) center / 100% 1px no-repeat;
}
input[type="range"]::-webkit-slider-thumb { appearance: none; width: 5px; height: 12px; background: #444; }
```
